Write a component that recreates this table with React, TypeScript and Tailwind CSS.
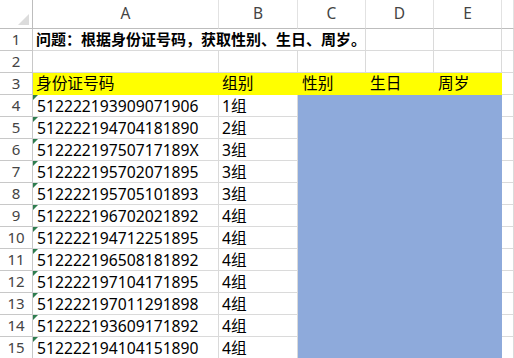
const ids = [
  ["512222193909071906", "1组"],
  ["512222194704181890", "2组"],
  ["51222219750717189X", "3组"],
  ["512222195702071895", "3组"],
  ["512222195705101893", "3组"],
  ["512222196702021892", "4组"],
  ["512222194712251895", "4组"],
  ["512222196508181892", "4组"],
  ["512222197104171895", "4组"],
  ["512222197011291898", "4组"],
  ["512222193609171892", "4组"],
  ["512222194104151890", "4组"],
];

const cols = ["A", "B", "C", "D", "E", ""];

function Corner() {
  return (
    <div className="relative border-r border-b border-[#bdbdbd] bg-white">
      <svg className="absolute right-[3px] bottom-[3px]" width="11" height="11" viewBox="0 0 11 11">
        <polygon points="11,0 11,11 0,11" fill="#dcdcdc" />
      </svg>
    </div>
  );
}

function Flag() {
  return (
    <svg className="absolute left-0 top-0" width="5" height="5" viewBox="0 0 5 5">
      <polygon points="0,0 5,0 0,5" fill="#2e7d4f" />
    </svg>
  );
}

export default function App() {
  const base = "flex items-center px-[3px] whitespace-nowrap";
  const cell = `${base} border-r border-b border-[#dadada]`;
  const yellow = `${base} bg-[#ffff00]`;
  const blue = "bg-[#8eaadb]";
  const rowHead = "border-r border-b border-[#c8c8c8] flex items-center justify-center text-[#444] text-[15px]";

  return (
    <div
      className="w-[514px] h-[358px] overflow-hidden bg-white text-black"
      style={{ fontFamily: '"Noto Sans", "Noto Sans CJK SC", sans-serif' }}
    >
      <div className="grid grid-cols-[33px_186px_79px_68px_68px_68px_1fr] grid-rows-[29px_repeat(15,22px)] text-[15.7px] leading-none">
        {/* column headers */}
        <Corner />
        {cols.map((c, i) => (
          <div
            key={i}
            className="border-r border-b border-r-[#e2e2e2] border-b-[#bdbdbd] flex items-center justify-center text-[#444] text-[15.5px]"
          >
            {c}
          </div>
        ))}

        {/* row 1 */}
        <div className={rowHead}>1</div>
        <div className={`${cell} col-span-3 font-bold text-[15px]`}>
          问题：根据身份证号码，获取性别、生日、周岁。
        </div>
        <div className={cell} />
        <div className={cell} />
        <div className={cell} />

        {/* row 2 */}
        <div className={rowHead}>2</div>
        {cols.map((c, i) => (
          <div key={i} className={cell} />
        ))}

        {/* row 3 */}
        <div className={rowHead}>3</div>
        <div className={yellow}>身份证号码</div>
        <div className={yellow}>组别</div>
        <div className={`${yellow} pl-[4px]`}>性别</div>
        <div className={`${yellow} pl-[4px]`}>生日</div>
        <div className={`${yellow} pl-[4px]`}>周岁</div>
        <div className={cell} />

        {/* data rows */}
        {ids.map(([id, g], r) => (
          <div key={id} className="contents">
            <div className={rowHead}>{r + 4}</div>
            <div className={`${cell} relative pt-[2px] pl-[4px]`}>
              <Flag />
              {id}
            </div>
            <div className={`${cell} pt-[2px]`}>{g}</div>
            <div className={blue} />
            <div className={blue} />
            <div className={blue} />
            <div className={cell} />
          </div>
        ))}
      </div>
    </div>
  );
}
